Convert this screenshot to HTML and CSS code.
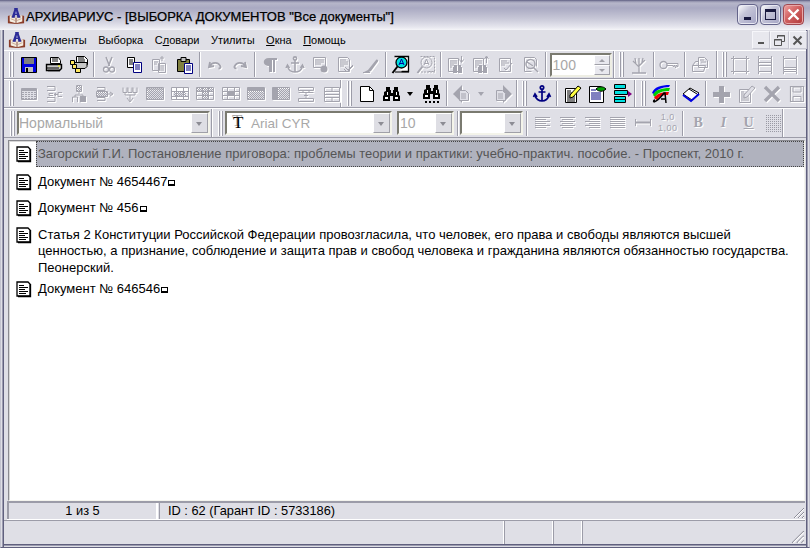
FILE: index.html
```html
<!DOCTYPE html>
<html lang="ru">
<head>
<meta charset="utf-8">
<title>АРХИВАРИУС</title>
<link rel="stylesheet" href="styles.css">
</head>
<body>
<svg class="defs" width="0" height="0">
<defs>
<pattern id="dith" width="2" height="2" patternUnits="userSpaceOnUse"><rect width="1" height="1" fill="#a4a4ae"/><rect x="1" y="1" width="1" height="1" fill="#a4a4ae"/></pattern>
<pattern id="dots2" width="2" height="2" patternUnits="userSpaceOnUse"><rect width="1" height="1" fill="#9a9aa4"/></pattern>
<symbol id="doc" viewBox="0 0 20 20"><path d="M3 3h11l2 2v12H3z" fill="#fff" stroke="#000" stroke-width="1.300"/><path d="M4 17.500h12.500V5" fill="none" stroke="#000" stroke-width="1.300"/><path d="M5 6.500h5M5 8.500h9M5 10.500h6M5 12.500h9M5 14.500h7" stroke="#000" fill="none"/></symbol>
<symbol id="logo" viewBox="0 0 20 20"><path d="M1 10l3-1v6l6 2 6-2V9l3 1v8l-9 1-9-1z" fill="#8a3c28"/><path d="M3 9l7 3 7-3v7l-7 2-7-2z" fill="#f4ece0"/><path d="M4 10l5 2M16 10l-5 2M4 13l5 2M16 13l-5 2" stroke="#c8a890"/><path d="M10 12v6" stroke="#804030"/><path d="M5 12L8 3V1h4v2l3 9h-3.500l-.5-3H9l-.5 3z" fill="#2c2c98"/><path d="M9.300 7.500h1.400L10 4.500z" fill="#d8d8f0"/></symbol>
<symbol id="save" viewBox="0 0 20 20"><path d="M2.500 2.500h15v15h-15z" fill="#0000e0" stroke="#000"/><path d="M5 3h10v6H5z" fill="#fff"/><path d="M5 4h10M5 6h10M5 8h10" stroke="#000"/><path d="M6 12h8v5H6z" fill="#c0c0c0"/><path d="M7 13h2v4H7z" fill="#000"/></symbol>
<symbol id="print" viewBox="0 0 20 20"><path d="M6.500 2.500h8l2 3v3h-10z" fill="#fff" stroke="#000"/><path d="M8 4h6M8 6h6" stroke="#000"/><path d="M2.500 9.500h15v4l-2 2h-13z" fill="#c8c8c8" stroke="#000" stroke-width="1.400"/><path d="M3 13h12" stroke="#000"/><path d="M4 15.500h12" stroke="#000" stroke-width="1.500"/><path d="M14 11h2" stroke="#ff0"/></symbol>
<symbol id="multi" viewBox="0 0 20 20"><path d="M7.500 1.500h8l3 3v5h-11z" fill="#fff" stroke="#000"/><path d="M9 3h6M9 5h7M9 7h7" stroke="#000"/><path d="M5 7.500h13v4l-2 2H5z" fill="#c8c8c8" stroke="#000"/><path d="M1.500 5.500h4v4h-4z" fill="#ffe860" stroke="#000"/><path d="M3.500 9.500h4v4h-4z" fill="#ffe860" stroke="#000"/><path d="M6.500 13.500h5v4h-5z" fill="#ffe860" stroke="#000"/></symbol>
<symbol id="cut" viewBox="0 0 20 20"><path d="M7 2l3.500 9M13 2l-3.500 9" stroke="currentColor" stroke-width="1.500" fill="none"/><circle cx="7" cy="14.500" r="2.500" fill="none" stroke="currentColor" stroke-width="1.300"/><circle cx="13" cy="14.500" r="2.500" fill="none" stroke="currentColor" stroke-width="1.300"/></symbol>
<symbol id="copy" viewBox="0 0 20 20"><path d="M3.500 2.500h7v10h-7z" fill="#fff" stroke="#000"/><path d="M5 5h4M5 7h4M5 9h4" stroke="#000"/><path d="M9.500 7.500h8v10h-8z" fill="#fff" stroke="#000080"/><path d="M11 10h5M11 12h5M11 14h5" stroke="#000080"/></symbol>
<symbol id="pasted" viewBox="0 0 20 20"><g fill="none" stroke="currentColor"><path d="M3.500 4.500h7v11h-7zM9.500 8.500h7v9h-7z"/><path d="M5 7h4M5 9h3M11 11h4M11 13h4M11 15h4M13 1v5M11 3h4"/></g></symbol>
<symbol id="paste" viewBox="0 0 20 20"><path d="M2.500 4.500h12v12h-12z" fill="#808040" stroke="#000"/><path d="M6 2.500h5v4H6z" fill="#c0c0c0" stroke="#000"/><path d="M9.500 8.500h8v10h-8z" fill="#fff" stroke="#000080"/><path d="M11 11h5M11 13h5M11 15h5" stroke="#000080"/></symbol>
<symbol id="undo" viewBox="0 0 20 20"><path d="M5 7l-1 5 5-1M4.500 11.500C7 7 13 6.500 15.500 11.500c.5 1-.5 2-2 2" fill="none" stroke="currentColor" stroke-width="1.800"/></symbol>
<symbol id="redo" viewBox="0 0 20 20"><path d="M15 7l1 5-5-1M15.500 11.500C13 7 7 6.500 4.500 11.500c-.5 1 .5 2 2 2" fill="none" stroke="currentColor" stroke-width="1.800"/></symbol>
<symbol id="pil" viewBox="0 0 20 20"><path d="M9 3h8v2h-2v12h-2V5h-1v12H9v-6c-7 0-7-8 0-8z" fill="currentColor"/></symbol>
<symbol id="anch" viewBox="0 0 20 20"><g fill="none" stroke="currentColor" stroke-width="1.600"><circle cx="10" cy="3.500" r="1.600"/><path d="M10 5v12M6 8h8M2.500 11c.5 4 4 6 7.500 6s7-2 7.500-6"/><path d="M1 13l1.500-3 2 3M15.500 13l2-3 1.500 3"/></g></symbol>
<symbol id="rec" viewBox="0 0 20 20"><path d="M3.500 2.500h12v10h-12z" fill="none" stroke="currentColor"/><path d="M5 5h9M5 7h9M5 9h6" stroke="currentColor"/><circle cx="14" cy="14" r="3.500" fill="currentColor"/></symbol>
<symbol id="chk" viewBox="0 0 20 20"><g fill="none" stroke="currentColor"><path d="M3.500 2.500h9l2 2v12h-11z"/><path d="M5 5h6M5 7h8M5 9h8M5 11h4"/><path d="M9 14l3 3 6-6M10 12l3 3 5-5"/></g></symbol>
<symbol id="pen" viewBox="0 0 20 20"><path d="M7 15L15 5c1-1 2.500 0 2 1.500L10 16c-2 1.500-4 1.500-6 1.500H2" fill="currentColor"/><path d="M2 17.500h7" stroke="currentColor"/></symbol>
<symbol id="find" viewBox="0 0 20 20"><path d="M3.500 1.500h14v15h-7" fill="#fff" stroke="#000" stroke-width="1.300"/><path d="M4 17h14" stroke="#000"/><circle cx="10.500" cy="7.500" r="5.500" fill="#00e0e0" stroke="#000" stroke-width="1.300"/><path d="M8 10l2.500-6 2.500 6M9 8.500h3" fill="none" stroke="#0000a0"/><path d="M6.500 11.500L1.500 18" stroke="#000" stroke-width="2"/></symbol>
<symbol id="findd" viewBox="0 0 20 20"><g fill="none" stroke="currentColor"><path d="M4.500 1.500h14v15h-7M5 17h14" stroke-dasharray="2 1"/><circle cx="10.500" cy="7.500" r="5.500"/><path d="M8 10l2.500-6 2.500 6M9 8.500h3"/><path d="M6.500 11.500L1.500 18" stroke-width="2"/></g></symbol>
<symbol id="bindn" viewBox="0 0 20 20"><g fill="none" stroke="currentColor"><path d="M2.500 3.500h10v13h-10z"/><path d="M4 6h7M4 8h7M4 10h4M4 12h2"/></g><path d="M7 12h4v6H7zM12 12h4v6h-4zM8 10h3v2H8zM12 10h3v2h-3z" fill="currentColor"/><path d="M15.500 1v6M13.500 4.500l2 3 2-3" fill="none" stroke="currentColor"/></symbol>
<symbol id="binup" viewBox="0 0 20 20"><g fill="none" stroke="currentColor"><path d="M2.500 3.500h10v13h-10z"/><path d="M4 6h7M4 8h7M4 10h4M4 12h2"/></g><path d="M7 12h4v6H7zM12 12h4v6h-4zM8 10h3v2H8zM12 10h3v2h-3z" fill="currentColor"/><path d="M15.500 8V2M13.500 4l2-3 2 3" fill="none" stroke="currentColor"/></symbol>
<symbol id="note" viewBox="0 0 20 20"><g fill="none" stroke="currentColor"><path d="M3.500 3.500h11v13h-11z"/><path d="M5 6h6M5 8h8M5 10h4"/><path d="M8 13l2 2 6-7"/></g></symbol>
<symbol id="lens" viewBox="0 0 20 20"><g fill="none" stroke="currentColor"><path d="M3.500 2.500h10l2 2v7M3.500 2.500v14h7"/><circle cx="9.500" cy="9" r="4.500" stroke-width="1.500"/><path d="M6 7l6 4M12.500 12.500l4.500 4.500" stroke-width="1.500"/></g></symbol>
<symbol id="tree" viewBox="0 0 20 20"><path d="M10 18V9M10 12L4 6M10 11l6-6M7 9L6 3M13 8l1-5M10 9V3M3 18h14" fill="none" stroke="currentColor" stroke-width="1.300"/></symbol>
<symbol id="key" viewBox="0 0 20 20"><g fill="none" stroke="currentColor"><ellipse cx="4.500" cy="10" rx="3.500" ry="3.500" stroke-width="1.300"/><path d="M8 8.500h11v3h-1v-1h-1v2h-1v-2h-1v1h-1v-1H8"/></g></symbol>
<symbol id="prn2" viewBox="0 0 20 20"><g fill="none" stroke="currentColor"><path d="M8.500 2.500h6l3 3v7h-9z"/><path d="M2.500 10.500l3-4h3M2.500 10.500h13l-2 6h-11z"/><path d="M10 5h4M11 7h5"/></g></symbol>
<symbol id="fr1" viewBox="0 0 20 20"><path d="M3.500 3.500h13v13h-13z" fill="none" stroke="currentColor"/><path d="M3.500 1v2M16.500 1v2M3.500 17v2M16.500 17v2M1 3.500h2M17 3.500h2M1 16.500h2M17 16.500h2" stroke="currentColor"/></symbol>
<symbol id="fr2" viewBox="0 0 20 20"><path d="M3.500 3.500h13v13h-13zM4 7.500h12M4 10.500h12" fill="none" stroke="currentColor"/><path d="M3.500 1v2M16.500 1v2M3.500 17v2M16.500 17v2" stroke="currentColor"/></symbol>
<symbol id="fr3" viewBox="0 0 20 20"><path d="M3.500 3.500h13v13h-13zM4 12.500h12M4 14.500h12" fill="none" stroke="currentColor"/><path d="M3.500 1v2M16.500 1v2M3.500 17v2M16.500 17v2" stroke="currentColor"/></symbol>
<symbol id="grid" viewBox="0 0 20 20"><path d="M2.500 4.500h15v11h-15z" fill="currentColor" stroke="currentColor"/><path d="M3 7.500h14M3 9.500h14M3 11.500h14M3 13.500h14M5.500 7v8M8.500 7v8M11.500 7v8M14.500 7v8" stroke="#dfdfe6"/></symbol>
<symbol id="mrg1" viewBox="0 0 20 20"><g fill="none" stroke="currentColor"><path d="M3 2.500h8v4H3M3 13.500h8v4H3M9 9.500H5v2h4M18 8.500h-4v4h4"/><path d="M14 10.500h-4M12 9l-2 1.500L12 12"/></g></symbol>
<symbol id="mrg2" viewBox="0 0 20 20"><g fill="none" stroke="currentColor"><path d="M7.500 1.500h5v6h-5zM3.500 18v-5h5v5M10 8v2"/></g><path d="M8 2h4v5H8z" fill="url(#dith)"/><path d="M11 12h6v6h-6z" fill="currentColor"/><path d="M6 13v-2h8v1" fill="none" stroke="currentColor"/></symbol>
<symbol id="mrg3" viewBox="0 0 20 20"><g fill="none" stroke="currentColor"><path d="M3 3.500h8v3H3M3 13.500h8v3H3"/><path d="M2.500 7.500h11v5h-11zM14 10h4M16 8l3 2-3 2"/></g><path d="M3 8h10v4H3z" fill="url(#dith)"/></symbol>
<symbol id="mrg4" viewBox="0 0 20 20"><g fill="none" stroke="currentColor"><path d="M3 3.500v5h4v-5M13 3.500v5h4v-5M8 3.500v5h4v-5M5 9v2h10V9M10 11v6M7 14l3 4 3-4"/></g></symbol>
<symbol id="tb1" viewBox="0 0 20 20"><path d="M1.500 3.500h17v12h-17z" fill="url(#dith)" stroke="currentColor"/><path d="M2 5h16" stroke="currentColor"/></symbol>
<symbol id="tb2" viewBox="0 0 20 20"><path d="M1.500 3.500h17v12h-17z" fill="none" stroke="currentColor"/><path d="M2 4h16v3H2zM2 13h16v2H2z" fill="#fff"/><path d="M4 8h12v5H4z" fill="url(#dith)"/><path d="M2 7.500h16M2 12.500h16M6.500 4v11M13.500 4v11" stroke="currentColor"/></symbol>
<symbol id="tb3" viewBox="0 0 20 20"><path d="M1.500 3.500h17v12h-17z" fill="none" stroke="currentColor"/><path d="M2 4h16v3H2z" fill="url(#dith)"/><path d="M8 8h5v7H8z" fill="url(#dith)"/><path d="M2 7.500h16M2 11.500h16M7.500 4v11M13.500 4v11" stroke="currentColor"/></symbol>
<symbol id="tb4" viewBox="0 0 20 20"><path d="M1.500 3.500h17v12h-17z" fill="none" stroke="currentColor"/><path d="M7 7h7v5H7z" fill="currentColor"/><path d="M2 7.500h16M2 11.500h16M6.500 4v11M13.500 4v11" stroke="currentColor"/></symbol>
<symbol id="tb5" viewBox="0 0 20 20"><path d="M1.500 3.500h17v12h-17z" fill="url(#dith)" stroke="currentColor"/><path d="M2 4h16v3H2z" fill="currentColor"/></symbol>
<symbol id="tb6" viewBox="0 0 20 20"><path d="M1.500 3.500h17v12h-17z" fill="url(#dith)" stroke="currentColor"/><path d="M2 4h5v11H2z" fill="currentColor"/></symbol>
<symbol id="rows1" viewBox="0 0 20 20"><path d="M2.500 3.500h15v3h-15zM2.500 8.500h15M2.500 14.500h15v3h-15zM10 9v5M8 11.500h4M7 6.500v2M13 6.500v2" fill="none" stroke="currentColor"/></symbol>
<symbol id="rows2" viewBox="0 0 20 20"><path d="M2.500 3.500h15v14h-15zM2.500 7.500h15M2.500 10.500h15M2.500 13.500h15M10 4v3M10 14v3" fill="none" stroke="currentColor"/></symbol>
<symbol id="newd" viewBox="0 0 20 20"><path d="M3.500 2.500h9l4 4v11h-13z" fill="#fff" stroke="#000"/><path d="M12.500 2.500v4h4" fill="none" stroke="#000"/></symbol>
<symbol id="bino" viewBox="0 0 20 20"><path d="M4 3h4v3h1v3h2V6h1V3h4v4l1 1v3l1 1v5h-7v-5H8v5H1v-5l1-1V8l2-1z" fill="#000"/><path d="M3 13h3v2H3zM13 13h3v2h-3zM5 8h1v3H5zM14 8h1v3h-1z" fill="#fff"/></symbol>
<symbol id="bino2" viewBox="0 0 20 20"><path d="M4 1h4v3h1v3h2V4h1V1h4v4l1 1v3l1 1v5h-7v-5H8v5H1v-5l1-1V6l2-1z" fill="#000"/><path d="M3 11h3v2H3zM13 11h3v2h-3zM5 6h1v3H5zM14 6h1v3h-1z" fill="#fff"/><path d="M3 17h2v2H3zM7 17h2v2H7zM11 17h2v2h-2zM15 17h2v2h-2z" fill="#000"/></symbol>
<symbol id="back" viewBox="0 0 20 20"><path d="M10 1L1 10l9 9z" fill="currentColor"/><g fill="#dfdfe6" stroke="currentColor"><path d="M7.500 6.500h6l3 3v7h-9z"/></g><path d="M9 10h5M9 12h5M9 14h5" stroke="currentColor"/></symbol>
<symbol id="fwd" viewBox="0 0 20 20"><path d="M10 1l9 9-9 9z" fill="currentColor"/><g fill="#dfdfe6" stroke="currentColor"><path d="M3.500 6.500h6l3 3v7h-9z"/></g><path d="M5 10h5M5 12h5M5 14h5" stroke="currentColor"/></symbol>
<symbol id="anchb" viewBox="0 0 20 20"><g fill="none" stroke="#000080" stroke-width="1.700"><circle cx="10" cy="3.500" r="1.700"/><path d="M10 5v12M6.500 8h7M3 11c.5 4 4 6 7 6s6.500-2 7-6"/><path d="M1.500 13l1.500-3 2 3M15 13l2-3 1.500 3"/></g></symbol>
<symbol id="edit" viewBox="0 0 20 20"><path d="M3.500 4.500h11v14h-11z" fill="#fff" stroke="#000"/><path d="M5 7h4M5 9h8M5 11h8M5 13h8M5 15h8M5 17h8" stroke="#000"/><path d="M8 11l8-9 3 2-8 9-3 1z" fill="#ffff40" stroke="#000"/></symbol>
<symbol id="view" viewBox="0 0 20 20"><path d="M2.500 2.500h11l3 3v13h-14z" fill="#fff" stroke="#000"/><path d="M4 6h5M4 9h10M4 11h10M4 13h10M4 15h10" stroke="#000080"/><path d="M9 5c3-3 7-3 10 0-3 3-7 3-10 0z" fill="#00a000" stroke="#000"/></symbol>
<symbol id="list" viewBox="0 0 20 20"><path d="M2.500 0.500h11v4h-11zM2.500 6.500h13v4h-13zM2.500 12.500h11v6h-11z" fill="#00e0e0" stroke="#000"/><path d="M3 15.500h11" stroke="#000"/><path d="M16 7l4 3-4 3z" fill="#800080"/></symbol>
<symbol id="color" viewBox="0 0 20 20"><path d="M1 9C3 3 10 1 19 1l-1 2C11 3 5 6 3 10z" fill="#0000f0"/><path d="M2 11C4 6 10 4 19 4l-1 3C12 7 7 8 4 13z" fill="#00d000"/><path d="M3 14c2-4 8-6 15-6l-1 3C12 11 8 12 6 16z" fill="#f00000"/><path d="M3 18c3-1 7-5 10-9h1l1 10M10 15h5M3 18c-1-1 0-2 1-2" fill="none" stroke="#000" stroke-width="1.500"/></symbol>
<symbol id="book" viewBox="0 0 20 20"><path d="M2 10l7-6 9 5-7 7z" fill="#fff" stroke="#000"/><path d="M2 11l8 6 8-7" fill="none" stroke="#0000e0" stroke-width="2"/><path d="M8 5l8 5" stroke="#000"/></symbol>
<symbol id="plus" viewBox="0 0 20 20"><path d="M8 2h5v6h6v5h-6v6H8v-6H2V8h6z" fill="currentColor"/></symbol>
<symbol id="pen2" viewBox="0 0 20 20"><path d="M3.500 5.500h11v13h-11z" fill="none" stroke="currentColor"/><path d="M5 8h3M5 10h8M5 12h8M5 14h8M5 16h8" stroke="currentColor"/><path d="M8 11l8-9 3 2-8 9-3 1z" fill="#dfdfe6" stroke="currentColor"/></symbol>
<symbol id="del" viewBox="0 0 20 20"><path d="M3 3l14 14M17 3L3 17" stroke="currentColor" stroke-width="3.400"/></symbol>
<symbol id="sav2" viewBox="0 0 20 20"><path d="M3.500 2.500h13v15h-13z" fill="none" stroke="currentColor" stroke-width="1.200"/><path d="M6 3h8v5H6zM6 12.500h8v5H6z" fill="none" stroke="currentColor"/></symbol>
<symbol id="al1" viewBox="0 0 20 20"><path d="M3 4.500h15M3 6.500h11M3 8.500h15M3 10.500h11M3 12.500h15M3 14.500h11" stroke="currentColor"/></symbol>
<symbol id="al2" viewBox="0 0 20 20"><path d="M3 4.500h15M5 6.500h11M3 8.500h15M5 10.500h11M3 12.500h15M5 14.500h11" stroke="currentColor"/></symbol>
<symbol id="al3" viewBox="0 0 20 20"><path d="M3 4.500h15M7 6.500h11M3 8.500h15M7 10.500h11M3 12.500h15M7 14.500h11" stroke="currentColor"/></symbol>
<symbol id="al4" viewBox="0 0 20 20"><path d="M3 4.500h15M3 6.500h15M3 8.500h15M3 10.500h15M3 12.500h15M3 14.500h15" stroke="currentColor"/></symbol>
<symbol id="width" viewBox="0 0 20 20"><path d="M3 9.500h14" stroke="currentColor" stroke-width="2"/><path d="M2.500 6v7M17.500 6v7" stroke="currentColor"/></symbol>
<symbol id="dots" viewBox="0 0 20 20"><rect x="1" y="1" width="18" height="18" fill="url(#dots2)"/></symbol>
<symbol id="grip" viewBox="0 0 12 12"><path d="M11 1L1 11M11 5L5 11M11 9l-2 2" stroke="#8c8c98" fill="none"/><path d="M11 2L2 11M11 6l-5 5M11 10l-1 1" stroke="#fff" fill="none"/></symbol>
</defs>
</svg>

<div class="window">
  <header class="titlebar">
    <svg class="ico20"><use href="#logo"/></svg>
    <span class="title">АРХИВАРИУС - [ВЫБОРКА ДОКУМЕНТОВ "Все документы"]</span>
    <div class="wbtns">
      <div class="wbtn"><i class="gl-min"></i></div>
      <div class="wbtn"><i class="gl-max"></i></div>
      <div class="wbtn close"><svg width="15" height="15" viewBox="0 0 15 15"><path d="M2.500 2.500l10 10M12.500 2.500l-10 10" stroke="#fff" stroke-width="2.400"/></svg></div>
    </div>
  </header>

  <nav class="menubar">
    <svg class="ico-menu"><use href="#logo"/></svg>
    <div class="menu">
      <span><u>Д</u>окументы</span>
      <span>Выборка</span>
      <span>С<u>л</u>овари</span>
      <span>Утилиты</span>
      <span><u>О</u>кна</span>
      <span><u>П</u>омощь</span>
    </div>
    <div class="mdi">
      <div class="mbtn"><i class="m-min"></i></div>
      <div class="mbtn"><svg width="13" height="13" viewBox="0 0 13 13"><path d="M4.500 4V1.500h7v6H9M1.500 5.500h7v6h-7z" fill="none" stroke="#555"/><path d="M4 2h8M1 6h8" stroke="#555"/></svg></div>
      <div class="mbtn"><svg width="13" height="13" viewBox="0 0 13 13"><path d="M2.500 2.500l8 8M10.500 2.500l-8 8" stroke="#555" stroke-width="2"/></svg></div>
    </div>
  </nav>

  <div class="tbrow">
    <div class="bar r1a">
      <b class="grip"></b>
      <div class="b"><svg><use href="#save"/></svg></div>
      <div class="b"><svg><use href="#print"/></svg></div>
      <div class="b"><svg><use href="#multi"/></svg></div>
      <b class="sep"></b>
      <div class="b d"><svg><use href="#cut"/></svg></div>
      <div class="b"><svg><use href="#copy"/></svg></div>
      <div class="b d"><svg><use href="#pasted"/></svg></div>
      <div class="b"><svg><use href="#paste"/></svg></div>
      <b class="sep"></b>
      <div class="b d"><svg><use href="#undo"/></svg></div>
      <div class="b d"><svg><use href="#redo"/></svg></div>
      <b class="sep"></b>
      <div class="b d"><svg><use href="#pil"/></svg></div>
      <div class="b d"><svg><use href="#anch"/></svg></div>
      <div class="b d"><svg><use href="#rec"/></svg></div>
      <div class="b d"><svg><use href="#chk"/></svg></div>
      <div class="b d"><svg><use href="#pen"/></svg></div>
      <b class="sep"></b>
      <div class="b"><svg><use href="#find"/></svg></div>
      <div class="b d"><svg><use href="#findd"/></svg></div>
      <b class="sep"></b>
      <div class="b d"><svg><use href="#bindn"/></svg></div>
      <div class="b d"><svg><use href="#binup"/></svg></div>
      <div class="b d"><svg><use href="#note"/></svg></div>
      <div class="b d"><svg><use href="#lens"/></svg></div>
      <b class="sep"></b>
      <div class="spin"><span class="spin-v">100</span><div class="spin-bs"><i class="up"></i><i class="dn"></i></div></div>
    </div>
    <div class="bar r1b">
      <b class="grip"></b>
      <div class="b d"><svg><use href="#tree"/></svg></div>
      <b class="sep"></b>
      <div class="b d"><svg><use href="#key"/></svg></div>
      <b class="sep"></b>
      <div class="b d"><svg><use href="#prn2"/></svg></div>
    </div>
    <div class="bar r1c">
      <b class="grip"></b>
      <div class="b d"><svg><use href="#fr1"/></svg></div>
      <div class="b d"><svg><use href="#fr2"/></svg></div>
      <div class="b d"><svg><use href="#fr3"/></svg></div>
    </div>
  </div>

  <div class="tbrow">
    <div class="bar r2a">
      <b class="grip"></b>
      <div class="b d"><svg><use href="#grid"/></svg></div>
      <div class="b d"><svg><use href="#mrg1"/></svg></div>
      <div class="b d"><svg><use href="#mrg2"/></svg></div>
      <div class="b d"><svg><use href="#mrg3"/></svg></div>
      <div class="b d"><svg><use href="#mrg4"/></svg></div>
      <div class="b d"><svg><use href="#tb1"/></svg></div>
      <div class="b d"><svg><use href="#tb2"/></svg></div>
      <div class="b d"><svg><use href="#tb3"/></svg></div>
      <div class="b d"><svg><use href="#tb4"/></svg></div>
      <div class="b d"><svg><use href="#tb5"/></svg></div>
      <div class="b d"><svg><use href="#tb6"/></svg></div>
      <div class="b d"><svg><use href="#rows1"/></svg></div>
      <div class="b d"><svg><use href="#rows2"/></svg></div>
    </div>
    <div class="bar r2b">
      <b class="grip"></b>
      <div class="b"><svg><use href="#newd"/></svg></div>
      <div class="b"><svg><use href="#bino"/></svg></div>
      <i class="drop"></i>
      <div class="b"><svg><use href="#bino2"/></svg></div>
      <b class="sep"></b>
      <div class="b d"><svg><use href="#back"/></svg></div>
      <i class="drop dim"></i>
      <div class="b d"><svg><use href="#fwd"/></svg></div>
    </div>
    <div class="bar r2c">
      <b class="grip"></b>
      <div class="b"><svg><use href="#anchb"/></svg></div>
      <b class="sep"></b>
      <div class="b"><svg><use href="#edit"/></svg></div>
      <div class="b"><svg><use href="#view"/></svg></div>
      <div class="b"><svg><use href="#list"/></svg></div>
    </div>
    <div class="bar r2d">
      <b class="grip"></b>
      <div class="b"><svg><use href="#color"/></svg></div>
      <b class="sep"></b>
      <div class="b"><svg><use href="#book"/></svg></div>
      <b class="sep"></b>
      <div class="b d"><svg><use href="#plus"/></svg></div>
      <div class="b d"><svg><use href="#pen2"/></svg></div>
      <div class="b d"><svg><use href="#del"/></svg></div>
      <div class="b d"><svg><use href="#sav2"/></svg></div>
    </div>
  </div>

  <div class="tbrow last">
    <div class="bar r3a">
      <b class="grip"></b>
      <div class="combo c-style"><span class="cv wide">Нормальный</span><i class="ca"></i></div>
    </div>
    <div class="bar r3b">
      <b class="grip"></b>
      <div class="combo c-font"><span class="tt">T</span><span class="cv">Arial CYR</span><i class="ca"></i></div>
      <div class="combo c-size"><span class="cv">10</span><i class="ca"></i></div>
      <b class="sep"></b>
      <div class="combo c-empty"><span class="cv"></span><i class="ca"></i></div>
      <b class="sep"></b>
      <div class="b d"><svg><use href="#al1"/></svg></div>
      <div class="b d"><svg><use href="#al2"/></svg></div>
      <div class="b d"><svg><use href="#al3"/></svg></div>
      <div class="b d"><svg><use href="#al4"/></svg></div>
      <div class="b d"><svg><use href="#width"/></svg></div>
      <div class="b d spc">1,0<br>1,00</div>
      <b class="sep"></b>
      <div class="b d fmt bold">B</div>
      <div class="b d fmt ital">I</div>
      <div class="b d fmt und">U</div>
      <div class="b d nf"><svg><use href="#dots"/></svg></div>
    </div>
  </div>

  <main class="content">
    <div class="row"><svg class="rico"><use href="#doc"/></svg><div class="rtext sel">Загорский Г.И. Постановление приговора: проблемы теории и практики: учебно-практич. пособие. - Проспект, 2010 г.</div></div>
    <div class="row"><svg class="rico"><use href="#doc"/></svg><div class="rtext">Документ № 4654467<i class="tofu"></i></div></div>
    <div class="row"><svg class="rico"><use href="#doc"/></svg><div class="rtext">Документ № 456<i class="tofu"></i></div></div>
    <div class="row multi"><svg class="rico"><use href="#doc"/></svg><div class="rtext">Статья 2 Конституции Российской Федерации провозгласила, что человек, его права и свободы являются высшей<br>ценностью, а признание, соблюдение и защита прав и свобод человека и гражданина являются обязанностью государства.<br>Пеонерский.</div></div>
    <div class="row"><svg class="rico"><use href="#doc"/></svg><div class="rtext">Документ № 646546<i class="tofu"></i></div></div>
  </main>

  <div class="st1">
    <div class="p1">1 из 5</div>
    <div class="p2">ID : 62 (Гарант ID : 5733186)</div>
    <svg class="sgrip"><use href="#grip"/></svg>
  </div>
  <footer class="st2">
    <div class="q q1"></div>
    <div class="q q2"></div>
    <div class="q q3"></div>
    <div class="q q4"></div>
    <svg class="sgrip2"><use href="#grip"/></svg>
  </footer>
</div>
</body>
</html>
```
FILE: styles.css
```css
* { box-sizing: border-box; }
html, body { margin: 0; padding: 0; }
body { width: 810px; height: 548px; overflow: hidden; font-family: "Liberation Sans", Arial, sans-serif; font-size: 13px; color: #000; background: #dfdfe6; }
.defs { display: block; width: 0; height: 0; }
.window { width: 810px; height: 548px; display: flex; flex-direction: column; background: #dfdfe6; border-left: 1px solid #c4c4d0; border-right: 1px solid #c4c4d0; border-bottom: 1px solid #60607e; box-shadow: inset 1px 0 #dfdfe6, inset 2px 0 #9c9cb0, inset 3px 0 #60607e, inset -1px 0 #dfdfe6, inset -2px 0 #9c9cb0, inset -3px 0 #60607e, inset 0 -1px #dfdfe6, inset 0 -2px #9c9cb0, inset 0 -3px #60607e; }

.titlebar { height: 30px; margin: 0 -1px; padding: 2px 6px 0 7px; display: flex; align-items: center; background: linear-gradient(#55557a 0, #8c8ca8 1px, #b6b6ca 3px, #a9a9c2 8px, #c6c6d6 18px, #e6e6ee 27px, #f5f5f8 30px); }
.ico20 { width: 18px; height: 18px; margin-right: 1px; flex: none; }
.title { font-size: 13px; -webkit-text-stroke: .25px #000; white-space: pre; }
.wbtns { margin-left: auto; display: flex; gap: 2px; padding-bottom: 3px; }
.wbtn { width: 21px; height: 21px; border: 1px solid #64648a; border-radius: 4px; background: linear-gradient(135deg, #fff, #c4c4d8 40%, #a4a4c4); display: flex; align-items: center; justify-content: center; box-shadow: inset 0 0 0 1px #e8e8f2; }
.wbtn.close { background: linear-gradient(135deg, #f0a0a0, #d06060 45%, #b03838); border-color: #a04850; box-shadow: inset 0 0 0 1px #e8a8a8; }
.gl-min { width: 7px; height: 3px; background: #1a1a40; margin-top: 8px; margin-right: 1px; }
.gl-max { width: 11px; height: 11px; border: 1px solid #1a1a40; border-top-width: 3px; }

.menubar { height: 20px; padding: 0 2px 0 7px; display: flex; align-items: center; }
.ico-menu { width: 18px; height: 18px; flex: none; }
.menu { display: flex; margin-left: 4px; gap: 11.500px; font-size: 11px; }
.mdi { margin-left: auto; display: flex; }
.mbtn { width: 18.500px; height: 18px; display: flex; align-items: center; justify-content: center; background: #e8e8ee; border: 1px solid; border-color: #f6f6fa #c8c8d2 #c8c8d2 #f6f6fa; }
.m-min { width: 6px; height: 2px; background: #555; margin-top: 6px; }

.tbrow { height: 29px; display: flex; border-top: 1px solid #fff; border-bottom: 1px solid #9c9ca8; margin: 0 3px; flex: none; align-items: stretch; }
.tbrow.last { height: 30px; }
.bar { display: flex; align-items: center; padding-left: 5px; border-right: 1px solid #9c9ca8; box-shadow: 1px 0 #fff; flex: none; }
.grip { width: 5px; height: 25px; margin-right: 2px; flex: none; background: linear-gradient(90deg, #fff 0 1px, #9c9ca8 1px 2px, #e8e8ee 2px 3px, #fff 3px 4px, #9c9ca8 4px 5px); }
.b { width: 25.250px; height: 24px; flex: none; display: flex; align-items: center; justify-content: center; }
.b svg { width: 20px; height: 20px; overflow: visible; display: block; }
.b.d { color: #a4a4ae; }
.b.d svg { filter: drop-shadow(1px 1px 0 #fff); }
.b.nf svg { filter: none; }
.sep { width: 2px; height: 25px; margin: 0 1.500px; flex: none; border-left: 1px solid #9c9ca8; border-right: 1px solid #fff; }
.r1a { width: 610px; }
.r1a .sep { margin: 0 1.300px; }
.r1b { width: 103px; }
.r1b .sep { margin: 0 1.800px; }
.r1c { flex: 1; border-right: 0; box-shadow: none; }
.r1c .grip { margin-right: 0; }
.r2a { width: 337px; }
.r2b { width: 176px; padding-left: 6px; }
.r2c { width: 118px; padding-left: 5px; }
.r2d { flex: 1; border-right: 0; box-shadow: none; padding-left: 6px; }
.r3a { width: 208px; padding-left: 6px; }
.r3b { width: 571px; padding-left: 6px; }
.drop { flex: none; width: 6px; height: 0; margin: 0 6.500px 0 2.500px; border: 3px solid transparent; border-top: 4px solid #000; border-bottom: 0; }
.drop.dim { border-top-color: #a4a4ae; }

.spin { width: 62px; height: 24px; margin-left: 1px; display: flex; background: #fff; border: 2px solid; border-color: #7a7a70 #eeeee4 #eeeee4 #7a7a70; }
.spin-v { flex: 1; padding-left: 1px; font-size: 14px; line-height: 20px; color: #a8a8a8; }
.spin-bs { width: 16px; display: flex; flex-direction: column; }
.spin-bs i { flex: 1; background: #e8e8ee; border: 1px solid; border-color: #fff #a0a0a8 #a0a0a8 #fff; position: relative; }
.spin-bs i::after { content: ""; position: absolute; left: 4px; top: 3px; border: 3px solid transparent; }
.spin-bs .up::after { border-bottom: 3px solid #a0a0a8; border-top: 0; }
.spin-bs .dn::after { border-top: 3px solid #a0a0a8; border-bottom: 0; }

.combo { height: 24px; display: flex; align-items: center; background: #fff; border: 2px solid; border-color: #7a7a70 #f4f4ea #f4f4ea #7a7a70; flex: none; margin-right: 1px; }
.c-style { width: 193px; }
.c-font { width: 167px; }
.c-size { width: 57px; margin-left: 4px; }
.c-empty { width: 63px; }
.cv { flex: 1; padding-left: 1px; color: #a8a8a8; font-size: 13px; white-space: nowrap; }
.cv.wide { font-size: 14px; padding-left: 0; }
.c-size .cv { font-size: 14px; }
.c-font .cv { padding-left: 4px; font-size: 13.500px; }
.tt { margin-left: 6px; width: 14px; font-family: "Liberation Serif", serif; font-size: 17px; line-height: 16px; text-shadow: -1px -2px 0 #a8a8a8; color: #000; }
.ca { width: 17px; height: 20px; flex: none; background: #dedee4; border: 1px solid; border-color: #fff #a0a0a8 #a0a0a8 #fff; position: relative; }
.ca::after { content: ""; position: absolute; left: 4px; top: 8px; border: 3.500px solid transparent; border-top: 4px solid #8c8c94; border-bottom: 0; }
.spc { font-size: 9px; line-height: 11px; text-align: center; color: #a4a4ae; letter-spacing: .5px; text-shadow: 1px 1px 0 #fff; }
.fmt { font-family: "Liberation Serif", serif; font-size: 14px; text-shadow: 1px 1px 0 #fff; font-weight: bold; }
.ital { font-style: italic; }
.und { text-decoration: underline; }

.content { height: 361px; margin: 2px 4px 0 7px; background: #fff; border: 1px solid; border-color: #8a8a90 #f4f4ee #f4f4ee #8a8a90; box-shadow: inset 1px 1px #d8d8d8; overflow: hidden; flex: none; }
.row { display: flex; padding-left: 5px; }
.rico { width: 20px; height: 20px; flex: none; margin: 3px 2px 0 0; }
.rtext { flex: 1; height: 26.500px; padding: 5px 2px; line-height: 16.500px; font-size: 13px; white-space: nowrap; }
.rtext.sel { height: 26px; margin-bottom: 1.500px; background: #b0b2be; outline: 1px dotted #444; outline-offset: -1px; color: #555; }
.row.multi .rtext { height: 54.500px; }
.tofu { display: inline-block; width: 7px; height: 6px; margin-left: 1px; border: 1px solid #000; border-bottom-width: 2px; }

.st1 { height: 19px; margin: 0 4px 0 6px; display: flex; flex: none; position: relative; border-top: 2px solid #9c9ca8; border-bottom: 1px solid #fff; font-size: 12.800px; }
.p1 { width: 150px; text-align: center; line-height: 16px; border-left: 2px solid #9c9ca8; border-right: 1px solid #fff; box-shadow: 1px 0 #fff; }
.p2 { flex: 1; padding-left: 8px; line-height: 16px; margin-left: 2px; border-left: 1px solid #9c9ca8; }
.sgrip { width: 12px; height: 12px; position: absolute; right: 0; bottom: 0; }
.st2 { flex: 1; margin: 0 4px 3px 3px; display: flex; position: relative; border-top: 1px solid #9c9ca8; }
.q { border-right: 1px solid #fff; height: 100%; margin-right: 2px; box-shadow: 1px 0 #9c9ca8; }
.q1 { width: 500px; }
.q2 { width: 47px; }
.q3 { width: 27px; }
.q4 { flex: 1; border-right: 0; box-shadow: none; margin-right: 0; }
.sgrip2 { width: 14px; height: 14px; position: absolute; right: 0; bottom: 0; }
```
